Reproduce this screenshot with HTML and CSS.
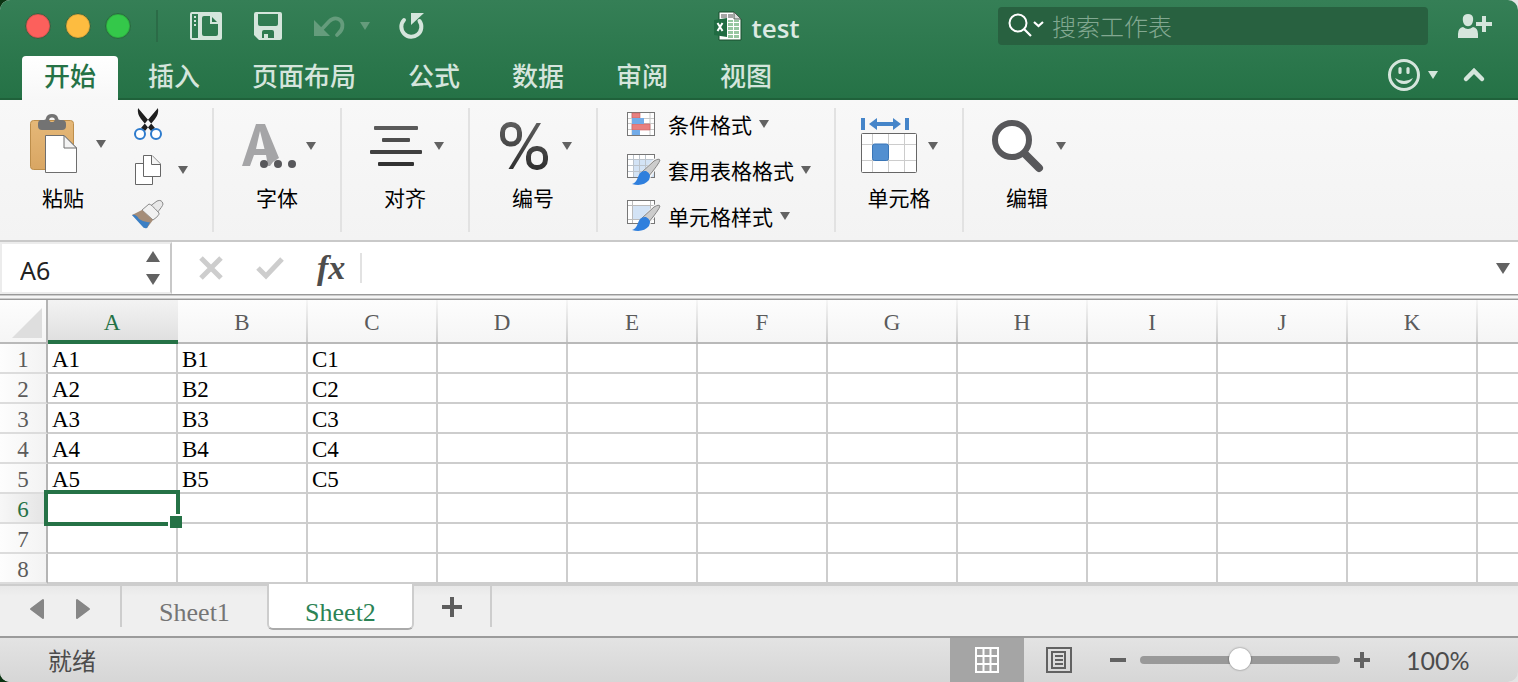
FILE: index.html
```
<!DOCTYPE html>
<html lang="zh-CN">
<head>
<meta charset="utf-8">
<title>test</title>
<link rel="stylesheet" href="styles.css">
</head>
<body>
<div class="window">
  <header class="top">
    <div class="titlebar">
      <div class="title-left">
        <div class="lights">
          <button class="light red" aria-label="关闭"></button>
          <button class="light amber" aria-label="最小化"></button>
          <button class="light green" aria-label="缩放"></button>
        </div>
        <span class="title-rule"></span>
        <div class="quick">
          <button class="icon-btn" aria-label="文件">
            <svg width="32" height="28" viewBox="0 0 32 28"><path fill="#d5e5dc" fill-rule="evenodd" d="M2 0H30Q32 0 32 2V26Q32 28 30 28H2Q0 28 0 26V2Q0 0 2 0ZM2 2V26H8V2ZM14 4Q12 4 12 6V22Q12 24 14 24H26Q28 24 28 22V12H20V4Z"/><path fill="#2d774e" d="M22 5L27 10H22Z"/><path fill="#d5e5dc" d="M4 4h2v2h-2zM4 8h2v2h-2zM4 12h2v2h-2z"/></svg>
          </button>
          <button class="icon-btn" aria-label="保存">
            <svg width="28" height="28" viewBox="0 0 28 28"><path fill="#d5e5dc" fill-rule="evenodd" d="M2 0H26Q28 0 28 2V26Q28 28 26 28H5L0 23V2Q0 0 2 0ZM4 2V12Q4 14 6 14H22Q24 14 24 12V2ZM10 18Q8 18 8 20V26H10V22H14V26H20V20Q20 18 18 18Z"/></svg>
          </button>
          <button class="icon-btn undo" aria-label="撤消">
            <svg width="32" height="24" viewBox="0 0 32 24"><path fill="#659c7c" d="M0 6V22H16Z"/><path d="M8 15L15 7.500C21 1.500 29.500 5 28.300 13C28 17 25 19 23 21" fill="none" stroke="#659c7c" stroke-width="3.800" stroke-linecap="round"/></svg>
            <span class="caret dim"></span>
          </button>
          <button class="icon-btn" aria-label="重做">
            <svg width="26" height="28" viewBox="0 0 26 28"><path d="M4 8A10 10 0 1 0 19.500 9" fill="none" stroke="#d5e5dc" stroke-width="4" stroke-linecap="round"/><path fill="#d5e5dc" d="M11 1H24L11 13Z"/></svg>
          </button>
        </div>
      </div>
      <div class="title">
        <svg width="28" height="31" viewBox="0 0 28 31"><path d="M5 1H20L27 8V29H5Z" fill="#fff" stroke="#184c2c"/><path fill="#a6a6a6" d="M7 3h6v4h-6zM14 3h5v4h-5z"/><path d="M20 1V8H27Z" fill="#ddd" stroke="#4c5b50"/><path fill="#95c6a0" d="M14 9h5v2h-5zM20 9h5v2h-5zM14 12h5v3h-5zM20 12h5v3h-5zM14 16h5v3h-5zM20 16h5v3h-5zM14 20h5v3h-5zM20 20h5v3h-5zM14 24h5v3h-5zM20 24h5v3h-5z"/><path fill="#206c42" d="M0 9L13 7V26L0 24Z"/><path d="M3.500 12L8.500 20M8.500 12L3.500 20" stroke="#fff" stroke-width="2"/></svg>
        <h1>test</h1>
      </div>
      <div class="title-right">
        <label class="search">
          <svg width="36" height="26" viewBox="0 0 36 26"><circle cx="10" cy="10" r="8.500" fill="none" stroke="#fff" stroke-width="2"/><path d="M16 16L23 23M26 9L30.500 13L35 9" fill="none" stroke="#fff" stroke-width="2.200"/></svg>
          <input type="text" placeholder="搜索工作表" aria-label="搜索工作表">
        </label>
        <button class="icon-btn" aria-label="共享">
          <svg width="34" height="26" viewBox="0 0 34 26"><path fill="#d5e5dc" d="M10 1C16 1 16 7 14 11C12 14 8 14 6 11C4 7 4 1 10 1ZM5 14Q10 18 15 14Q20 15 20 21V25H0V21Q0 15 5 14ZM24 3h4v6h6v4h-6v6h-4v-6h-6v-4h6z"/></svg>
        </button>
      </div>
    </div>
    <nav class="tabs">
      <button class="tab on">开始</button>
      <button class="tab">插入</button>
      <button class="tab">页面布局</button>
      <button class="tab">公式</button>
      <button class="tab">数据</button>
      <button class="tab">审阅</button>
      <button class="tab">视图</button>
      <div class="tabs-end">
        <button class="icon-btn smile" aria-label="反馈">
          <svg width="32" height="32" viewBox="0 0 32 32"><circle cx="16" cy="16" r="14.500" fill="none" stroke="#d5e5dc" stroke-width="3"/><path d="M12 9.500V13.500M20 9.500V13.500" stroke="#d5e5dc" stroke-width="3.200" stroke-linecap="round"/><path fill="#d5e5dc" d="M7 19Q16 25 25 19Q22 25 16 25Q10 25 7 19Z"/></svg>
          <span class="caret pale"></span>
        </button>
        <button class="icon-btn" aria-label="折叠功能区">
          <svg width="20" height="14" viewBox="0 0 20 14"><path d="M2 11L10 3L18 11" fill="none" stroke="#d5e5dc" stroke-width="4.500" stroke-linecap="round"/></svg>
        </button>
      </div>
    </nav>
  </header>

  <section class="ribbon">
    <div class="group clipboard">
      <button class="big">
        <span class="art">
          <svg width="48" height="60" viewBox="0 0 48 60"><defs><linearGradient id="wood" x2="0" y2="1"><stop stop-color="#e5b878"/><stop offset="1" stop-color="#d9a663"/></linearGradient></defs><rect x="1.500" y="6.500" width="43" height="49" rx="3" fill="url(#wood)" stroke="#bd8e4b"/><path fill="#737373" fill-rule="evenodd" d="M12 6H15Q17 6 17 4Q18 0 23 0Q28 0 29 4Q29 6 31 6H33Q37 6 37 10V12Q37 16 33 16H13Q9 16 9 12V10Q9 6 12 6ZM23 3.500A2.300 2.300 0 1 0 23 8A2.300 2.300 0 1 0 23 3.500Z"/><path d="M16.500 21.500H35L47.500 34V58.500H16.500Z" fill="#fff" stroke="#6e6e6e"/><path d="M35 21.500V34H47.500Z" fill="#f3f3f3" stroke="#6e6e6e"/></svg>
          <span class="caret"></span>
        </span>
        <span class="cap">粘贴</span>
      </button>
      <div class="stack">
        <button class="icon-btn" aria-label="剪切">
          <svg width="28" height="32" viewBox="0 0 28 32"><path fill="#1f1f1f" d="M4 0Q3 6 7 11L17 23L21 20ZM24 0Q25 6 21 11L11 23L7 20Z"/><circle cx="6" cy="26" r="5" fill="#fff" stroke="#2d7bcd" stroke-width="2"/><circle cx="22" cy="26" r="5" fill="#fff" stroke="#2d7bcd" stroke-width="2"/></svg>
        </button>
        <button class="icon-btn copy" aria-label="复制">
          <svg width="28" height="32" viewBox="0 0 28 32"><path d="M1.500 9.500H18.500V30.500H1.500Z" fill="#fff" stroke="#666"/><path d="M9.500 1.500H18L26.500 10V22.500H9.500Z" fill="#fff" stroke="#666"/><path d="M17.500 1.500V10.500H26.500" fill="#f5f5f5" stroke="#666"/></svg>
          <span class="caret"></span>
        </button>
        <button class="icon-btn brush" aria-label="格式刷">
          <svg width="32" height="30" viewBox="0 0 32 30"><path d="M17 7L25 1Q30-1 31 4Q31 6 24 14Z" fill="#e8e8e8" stroke="#8a8a8a"/><path d="M10 10L17 4Q19 4 27 13Q28 15 21 20Z" fill="#f1f1f1" stroke="#8a8a8a"/><path fill="#a58d78" d="M0 15L10 10L21 20L15 28Z"/><path fill="#3b7fc4" d="M0 15Q4 14 7 19Q13 23 18 22L15 28Q12 29 10 26Z"/></svg>
        </button>
      </div>
    </div>
    <div class="group">
      <button class="big">
        <span class="art">
          <svg width="56" height="60" viewBox="0 0 56 60"><path fill="#a5a5a7" fill-rule="evenodd" d="M17 8H26L40 42L34 46L31 50H29L27 39H15L11 50H3ZM21 15L17 33H25.500Z"/><g fill="#58585b"><circle cx="25" cy="48" r="4"/><circle cx="39" cy="48" r="4"/><circle cx="53" cy="48" r="4"/></g></svg>
          <span class="caret"></span>
        </span>
        <span class="cap">字体</span>
      </button>
    </div>
    <div class="group">
      <button class="big">
        <span class="art">
          <svg width="56" height="60" viewBox="0 0 56 60"><rect x="7" y="10" width="44" height="4" rx="1" fill="#5a5a5a"/><rect x="15" y="22" width="28" height="4" rx="1" fill="#4d4d4d"/><rect x="3" y="34" width="52" height="4" rx="1" fill="#404040"/><rect x="11" y="46" width="36" height="4" rx="1" fill="#323232"/></svg>
          <span class="caret"></span>
        </span>
        <span class="cap">对齐</span>
      </button>
    </div>
    <div class="group">
      <button class="big">
        <span class="art">
          <svg width="56" height="60" viewBox="0 0 56 60"><defs><linearGradient id="ink" gradientUnits="userSpaceOnUse" x1="0" y1="6" x2="0" y2="56"><stop stop-color="#5e5e5e"/><stop offset="1" stop-color="#2d2d2d"/></linearGradient></defs><g fill="none" stroke="url(#ink)" stroke-width="5"><rect x="7.500" y="8.500" width="17" height="19.500" rx="8"/><rect x="33.500" y="32.500" width="17" height="19" rx="8"/></g><path fill="url(#ink)" d="M41.500 7H46L18 53H13.500Z"/></svg>
          <span class="caret"></span>
        </span>
        <span class="cap">编号</span>
      </button>
    </div>
    <div class="group styles">
      <button class="line">
        <svg width="34" height="32" viewBox="0 0 34 32"><rect x=".5" y="4.500" width="27" height="23" fill="#fff" stroke="#777"/><path d="M5 5V27M23 5V27M1 10.500H27M1 15.500H27M1 21.500H27" stroke="#c8c8c8"/><path fill="#e88080" stroke="#c95f5f" stroke-width=".6" d="M5 5h8v5h-8zM5 16h18v6h-18z"/><path fill="#72abe8" d="M5 10h12v6h-12zM5 22h8v5h-8z"/></svg>
        <span>条件格式</span><span class="caret"></span>
      </button>
      <button class="line">
        <svg width="34" height="32" viewBox="0 0 34 32"><rect x=".5" y=".5" width="27" height="23" fill="#fff" stroke="#777"/><path fill="#d3e3f5" d="M7 6h20v17h-20z"/><path d="M6.500 1V23M12.500 1V23M18.500 1V23M1 5.500H27M1 11.500H27M1 17.500H27" stroke="#bcc4cc"/><path d="M13 22L27 7Q31 3 33 6L21 25Z" fill="#f5f5f5" stroke="#f5f5f5" stroke-width="3"/><path d="M15 18L27 7Q32 4 33 6Q32 10 21 23Z" fill="#ccc" stroke="#858585"/><path fill="#2f7fdd" d="M5 30Q9 29 11 23Q13 16 19 17Q25 20 22 26Q16 33 5 30Z"/></svg>
        <span>套用表格格式</span><span class="caret"></span>
      </button>
      <button class="line">
        <svg width="34" height="32" viewBox="0 0 34 32"><rect x=".5" y=".5" width="27" height="23" fill="#fff" stroke="#777"/><path fill="#d3e3f5" d="M6 6h17v13h-17z"/><path d="M5.500 1V23M23.500 1V23M1 5.500H27M1 19.500H27" stroke="#bbb"/><path d="M13 22L27 7Q31 3 33 6L21 25Z" fill="#f5f5f5" stroke="#f5f5f5" stroke-width="3"/><path d="M15 18L27 7Q32 4 33 6Q32 10 21 23Z" fill="#ccc" stroke="#858585"/><path fill="#2f7fdd" d="M5 30Q9 29 11 23Q13 16 19 17Q25 20 22 26Q16 33 5 30Z"/></svg>
        <span>单元格样式</span><span class="caret"></span>
      </button>
    </div>
    <div class="group">
      <button class="big">
        <span class="art">
          <svg width="56" height="60" viewBox="0 0 56 60"><path fill="#4585c9" d="M0 2h4v12h-4zM44 2h4v12h-4zM8 8L16 2V6H32V2L40 8L32 14V10H16V14Z"/><rect x=".5" y="17.500" width="55" height="39" rx="1" fill="#fff" stroke="#666"/><path d="M11.500 18V56M27.500 18V56M43.500 18V56M1 28.500H55M1 44.500H55" stroke="#ccc"/><rect x="11.500" y="28" width="16" height="16.500" rx="2" fill="#528fd0" stroke="#3975b6"/></svg>
          <span class="caret"></span>
        </span>
        <span class="cap">单元格</span>
      </button>
    </div>
    <div class="group last">
      <button class="big">
        <span class="art">
          <svg width="56" height="60" viewBox="0 0 56 60"><path d="M35 37L50 52" stroke="#58585b" stroke-width="8" stroke-linecap="round"/><circle cx="23" cy="24" r="17" fill="#fff" stroke="#58585b" stroke-width="6"/></svg>
          <span class="caret"></span>
        </span>
        <span class="cap">编辑</span>
      </button>
    </div>
  </section>

  <section class="formula">
    <div class="namebox">
      <input type="text" value="A6" aria-label="名称框">
      <div class="steps">
        <button class="step up" aria-label="上"></button>
        <button class="step down" aria-label="下"></button>
      </div>
    </div>
    <div class="fx-tools">
      <button class="icon-btn" aria-label="取消"><svg width="24" height="24" viewBox="0 0 24 24"><path d="M2 2L22 22M22 2L2 22" stroke="#cdcdcd" stroke-width="5"/></svg></button>
      <button class="icon-btn" aria-label="输入"><svg width="28" height="24" viewBox="0 0 28 24"><path d="M2 12L10 20L26 3" fill="none" stroke="#cdcdcd" stroke-width="5"/></svg></button>
      <button class="icon-btn fx">fx</button>
    </div>
    <input class="fx-input" type="text" aria-label="编辑栏">
    <button class="icon-btn expand" aria-label="展开编辑栏"><span class="caret wide"></span></button>
  </section>
  <div class="splitter"></div>

  <table class="grid">
    <thead>
      <tr><th class="corner"><svg width="30" height="30" viewBox="0 0 30 30"><path d="M30 0V30H0Z" fill="#dedede"/></svg></th><th class="sel">A</th><th>B</th><th>C</th><th>D</th><th>E</th><th>F</th><th>G</th><th>H</th><th>I</th><th>J</th><th>K</th><th class="rest"></th></tr>
    </thead>
    <tbody>
      <tr><th>1</th><td>A1</td><td>B1</td><td>C1</td><td></td><td></td><td></td><td></td><td></td><td></td><td></td><td></td><td></td></tr>
      <tr><th>2</th><td>A2</td><td>B2</td><td>C2</td><td></td><td></td><td></td><td></td><td></td><td></td><td></td><td></td><td></td></tr>
      <tr><th>3</th><td>A3</td><td>B3</td><td>C3</td><td></td><td></td><td></td><td></td><td></td><td></td><td></td><td></td><td></td></tr>
      <tr><th>4</th><td>A4</td><td>B4</td><td>C4</td><td></td><td></td><td></td><td></td><td></td><td></td><td></td><td></td><td></td></tr>
      <tr><th>5</th><td>A5</td><td>B5</td><td>C5</td><td></td><td></td><td></td><td></td><td></td><td></td><td></td><td></td><td></td></tr>
      <tr><th class="sel">6</th><td class="active"></td><td></td><td></td><td></td><td></td><td></td><td></td><td></td><td></td><td></td><td></td><td></td></tr>
      <tr><th>7</th><td></td><td></td><td></td><td></td><td></td><td></td><td></td><td></td><td></td><td></td><td></td><td></td></tr>
      <tr><th>8</th><td></td><td></td><td></td><td></td><td></td><td></td><td></td><td></td><td></td><td></td><td></td><td></td></tr>
    </tbody>
  </table>

  <section class="sheets">
    <div class="sheet-nav">
      <button class="icon-btn" aria-label="上一张"><svg width="14" height="20" viewBox="0 0 14 20"><path d="M13 1V19L1 10Z" fill="#868686" stroke="#868686" stroke-width="2" stroke-linejoin="round"/></svg></button>
      <button class="icon-btn" aria-label="下一张"><svg width="14" height="20" viewBox="0 0 14 20"><path d="M1 1V19L13 10Z" fill="#868686" stroke="#868686" stroke-width="2" stroke-linejoin="round"/></svg></button>
    </div>
    <button class="sheet">Sheet1</button>
    <button class="sheet on">Sheet2</button>
    <button class="sheet-add" aria-label="新建工作表"><svg width="20" height="20" viewBox="0 0 20 20"><path d="M10 0V20M0 10H20" stroke="#5d5d5d" stroke-width="4"/></svg></button>
  </section>

  <footer class="status">
    <span class="ready">就绪</span>
    <button class="view on" aria-label="普通视图"><svg width="24" height="26" viewBox="0 0 24 26"><path d="M1 1H23V25H1ZM8.500 1V25M15.500 1V25M1 9H23M1 17H23" fill="none" stroke="#fff" stroke-width="2"/></svg></button>
    <button class="view" aria-label="页面布局视图"><svg width="28" height="26" viewBox="0 0 28 26"><path d="M2 1H26V25H2ZM7 5H20V21H7Z" fill="none" stroke="#626262" stroke-width="2"/><path d="M10 9H18M10 13H18M10 17H18" stroke="#626262" stroke-width="2"/></svg></button>
    <div class="zoom">
      <button class="icon-btn" aria-label="缩小"><svg width="16" height="16" viewBox="0 0 16 16"><path d="M0 8H16" stroke="#626262" stroke-width="4"/></svg></button>
      <input type="range" min="0" max="200" value="100" aria-label="缩放比例">
      <button class="icon-btn" aria-label="放大"><svg width="16" height="16" viewBox="0 0 16 16"><path d="M0 8H16M8 0V16" stroke="#626262" stroke-width="4"/></svg></button>
    </div>
    <span class="percent">100%</span>
  </footer>
</div>
</body>
</html>
```
FILE: styles.css
```
* { box-sizing: border-box; }
body {
  margin: 0;
  background: linear-gradient(90deg, #0b3312, #e4e4e4);
  font-family: "Noto Sans", "Noto Sans CJK SC", sans-serif;
  color: #000;
}
button, input { font: inherit; color: inherit; border: 0; background: none; margin: 0; padding: 0; }
button { cursor: pointer; }
input { outline: 0; min-width: 0; }
svg { display: block; flex: none; overflow: visible; }
.window { display: flex; flex-direction: column; min-height: 100vh; border-radius: 10px; overflow: hidden; background: #efefef; }
.icon-btn { display: flex; align-items: center; }
.caret { flex: none; border: 5px solid transparent; border-top: 8px solid #626262; border-bottom: 0; }
.caret.pale { border-top-color: #d5e5dc; }
.caret.dim { border-top-color: #659c7c; }
.caret.wide { border-width: 11px 7px 0; }

.top { background: linear-gradient(#357f56, #257246); border-bottom: 2px solid #1f613a; }
.titlebar { display: grid; grid-template-columns: 1fr auto 1fr; align-items: center; height: 52px; }
.title-left, .lights, .quick, .title, .title-right { display: flex; align-items: center; }
.lights { gap: 14px; padding-left: 25px; }
.light { width: 26px; height: 26px; border-radius: 50%; border: 1px solid #2a6541; box-shadow: inset 0 0 0 1px #0002; }
.red { background: #fc605c; }
.amber { background: #fdbc40; }
.green { background: #34c84a; }
.title-rule { width: 2px; height: 32px; margin: 0 32px 0 25px; background: #2b6b47; }
.quick { gap: 32px; }
.undo { gap: 14px; }
.quick .undo { margin-right: -2px; }
.title { gap: 9px; padding-right: 4px; }
.title h1 { margin: 0; font: 600 26px/36px "Open Sans", sans-serif; color: #dceae2; padding-top: 4px; }
.title-right { justify-content: flex-end; gap: 30px; padding-right: 26px; }
.search { display: flex; align-items: center; gap: 8px; width: 430px; height: 38px; padding: 0 10px; border-radius: 4px; background: #286140; color: #fff; }
.search input { flex: 1; font: 300 24px/36px "Noto Sans CJK SC", sans-serif; }
.search input::placeholder { color: #82a891; opacity: 1; }

.tabs { display: flex; gap: 8px; height: 46px; padding: 4px 34px 0 22px; }
.tab { padding: 0 22px; font: 500 26px/36px "Noto Sans CJK SC", sans-serif; padding-bottom: 4px; color: #d5e5dc; white-space: nowrap; }
.tab.on { background: linear-gradient(#fff, #f7f7f7); color: #257246; border-radius: 4px 4px 0 0; height: 44px; padding-bottom: 6px; }
.tabs-end { display: flex; align-items: center; gap: 26px; margin-left: auto; padding-bottom: 4px; }
.smile { gap: 8px; }

.ribbon { display: flex; height: 142px; padding: 8px 0; background: linear-gradient(#f8f8f8, #f3f3f3); border-bottom: 2px solid #c9c9c9; }
.group { flex: none; width: 128px; height: 124px; border-right: 2px solid #e2e2e2; }
.group.last { border-right: 0; }
.big { display: flex; flex-direction: column; align-items: center; width: 126px; padding: 6px 0 0; }
.art { display: flex; align-items: center; gap: 11px; height: 64px; }
.cap, .line { font: 400 21px/32px "Noto Sans CJK SC", sans-serif; }
.cap { padding-top: 3px; }
.clipboard { display: flex; width: 214px; padding-left: 24px; }
.clipboard .big { width: 88px; flex: none; align-items: flex-start; padding-left: 5px; }
.clipboard .art { gap: 19px; padding-bottom: 4px; }
.clipboard .cap { padding-left: 13px; }
.stack { display: flex; flex-direction: column; gap: 14px; padding-left: 22px; }
.stack svg { margin-right: 16px; }
.stack .brush { margin-left: -2px; }
.styles { display: flex; flex-direction: column; gap: 14px; width: 238px; padding-left: 29px; }
.line { display: flex; align-items: center; gap: 7px; line-height: 30px; height: 32px; white-space: nowrap; }

.formula { display: flex; align-items: center; height: 52px; background: #fff; }
.namebox { display: flex; align-items: center; width: 172px; height: 52px; padding: 0 10px 0 18px; border: 2px solid #ececec; border-right-color: #c8c8c8; }
.namebox input { flex: 1; width: 100%; font-size: 25px; line-height: 34px; padding-top: 4px; color: #222; }
.steps { display: flex; flex-direction: column; gap: 12px; }
.step { border: 7px solid transparent; }
.up { border-bottom: 11px solid #626262; border-top: 0; }
.down { border-top: 11px solid #626262; border-bottom: 0; }
.fx-tools { display: flex; align-items: center; gap: 33px; padding: 0 15px 0 27px; height: 30px; border-right: 2px solid #e2e2e2; }
.fx { font: italic 700 34px/34px "Liberation Serif", serif; color: #4d4d4d; }
.fx-input { flex: 1; height: 40px; padding: 0 8px; font-size: 24px; }
.expand { padding-right: 8px; }
.splitter { height: 6px; background: linear-gradient(#999 1px, #ccc 1px 2px, #f5f5f5 2px 4px, #ccc 4px 5px, #999 5px); }

.grid { width: 100%; table-layout: fixed; border-collapse: separate; border-spacing: 0; background: #fff; font: 23px/24px "Liberation Serif", serif; border-bottom: 2px solid #cdcdcd; }
.grid th, .grid td { padding: 4px 0 0; height: 30px; border-right: 2px solid #cdcdcd; border-bottom: 2px solid #cdcdcd; }
.grid td { padding-left: 4px; white-space: nowrap; }
.grid th { font-weight: 400; color: #5b5b5b; }
.grid thead th { width: 130px; height: 44px; background: linear-gradient(#fdfdfd, #f5f5f5); border-bottom-color: #b9b9b9; border-image: linear-gradient(#f8f8f8, #cdcdcd 95%, #b9b9b9 95%) 2; }
.grid thead .corner { width: 48px; padding-left: 12px; border-image: none; border-right-color: #b4b4b4; }
.grid thead .rest { width: auto; border-image: none; }
.grid tr > :last-child { border-right: 0; }
.grid thead .sel { padding: 6px 2px 0 0; background: linear-gradient(#f3f3f3, #e0e0e0); border-image: none; border-right: 0; border-bottom: 4px solid #257246; }
.grid tbody th { background: linear-gradient(90deg, #fdfdfd, #f3f3f3); border-right-color: #b4b4b4; border-bottom-color: #dcdcdc; }
.grid tbody .sel { background: linear-gradient(90deg, #f7f7f7, #e4e4e4); }
.grid .sel { color: #257246; -webkit-text-stroke: 0; }
.active { position: relative; }
.active::before { content: ""; position: absolute; inset: -4px; border: 4px solid #257246; }
.active::after { content: ""; position: absolute; right: -6px; bottom: -6px; width: 12px; height: 12px; border: 2px solid #fff; border-width: 2px 0 0 2px; background: #257246; }

.sheets { display: flex; height: 50px; background: linear-gradient(#e8e8e8, #efefef 10px); }
.sheet-nav { display: flex; gap: 32px; height: 41px; padding: 5px 30px 0; width: 122px; border-right: 2px solid #cdcdcd; }
.sheet { width: 145px; font: 26px/42px "Liberation Serif", serif; height: 46px; padding-top: 6px; color: #757575; }
.sheet.on { width: 147px; margin-top: -2px; padding-top: 8px; background: #fff; color: #2c8355; border: 2px solid #cdcdcd; border-top: 0; border-bottom-color: #aaa; border-radius: 0 0 6px 6px; }
.sheet-add { display: flex; align-items: center; justify-content: center; width: 78px; height: 41px; border-right: 2px solid #cdcdcd; }

.status { display: flex; align-items: center; flex: 1; min-height: 46px; background: linear-gradient(#e3e3e3, #d6d6d6); border-top: 2px solid #9b9b9b; color: #4c4c4c; }
.ready { flex: 1; padding-left: 48px; font: 24px/34px "Noto Sans CJK SC", sans-serif; }
.view { display: flex; align-items: center; justify-content: center; align-self: stretch; width: 70px; }
.view.on { width: 74px; background: #a5a5a5; }
.zoom { display: flex; align-items: center; gap: 14px; padding-left: 16px; }
.zoom input { appearance: none; width: 200px; height: 24px; }
.zoom input::-webkit-slider-runnable-track { height: 8px; border-radius: 4px; background: #999; }
.zoom input::-webkit-slider-thumb { appearance: none; width: 22px; height: 22px; margin-top: -8px; border-radius: 50%; background: #fff; box-shadow: 0 0 2px #0008; }
.percent { width: 148px; padding-left: 36px; font: 25px/34px Lato, sans-serif; }
```
